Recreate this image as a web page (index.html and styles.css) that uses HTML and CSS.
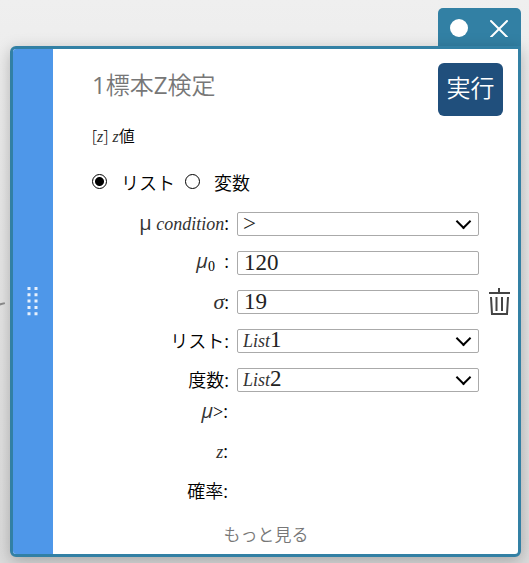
FILE: index.html
```html
<!DOCTYPE html>
<html lang="ja">
<head>
    <meta charset="utf-8">
    <title>1標本Z検定</title>
    <link rel="stylesheet" href="styles.css">
</head>
<body>
    <div class="tab">
        <button type="button" class="dot" aria-label="最小化"></button>
        <button type="button" class="close" aria-label="閉じる">
            <svg width="18" height="18" viewBox="0 0 18 18" fill="none" stroke="#fff" stroke-width="2" stroke-linecap="round">
                <path d="M1 2L17 18M17 2L1 18"/>
            </svg>
        </button>
    </div>
    <div class="window">
        <div class="handle">
            <svg width="12" height="30" viewBox="0 0 12 30" stroke="#e8f1fc" stroke-width="3" stroke-dasharray="3 3.3">
                <path d="M2 0V29M9 0V29"/>
            </svg>
        </div>
        <div class="header">
            <h1><span class="latin">1</span>標本<span class="latin">Z</span>検定</h1>
            <button type="submit" form="testForm" class="run">実行</button>
        </div>
        <form id="testForm" class="content">
            <p class="result-name">[<i>z</i>] <i>z</i>値</p>
            <div class="mode">
                <label><input type="radio" name="mode" checked>リスト</label>
                <label><input type="radio" name="mode">変数</label>
            </div>
            <div class="row">
                <label for="cond"><span class="mu">μ</span> <i>condition</i><b>:</b></label>
                <select id="cond">
                    <button><selectedcontent></selectedcontent></button>
                    <option>&gt;</option>
                    <option>&lt;</option>
                    <option>≠</option>
                </select>
            </div>
            <div class="row">
                <label for="mu0"><span class="mu slant">μ</span><span class="sub">0</span>&nbsp; <b>:</b></label>
                <input type="text" id="mu0" value="120">
            </div>
            <div class="row">
                <label for="sigma"><i class="sigma">σ</i><b>:</b></label>
                <input type="text" id="sigma" value="19">
            </div>
            <div class="row">
                <label for="list">リスト<b>:</b></label>
                <select id="list">
                    <button><selectedcontent></selectedcontent></button>
                    <option><i>List</i>1</option>
                </select>
            </div>
            <div class="row">
                <label for="freq">度数<b>:</b></label>
                <select id="freq">
                    <button><selectedcontent></selectedcontent></button>
                    <option><i>List</i>2</option>
                </select>
            </div>
            <div class="results">
                <div><span class="mu slant">μ</span><span class="gt">&gt;</span><b>:</b></div>
                <div><i>z</i><b>:</b></div>
                <div>確率<b>:</b></div>
            </div>
            <button type="button" class="more">もっと見る</button>
        </form>
        <button type="button" class="trash" aria-label="削除">
            <svg width="22" height="28" viewBox="0 0 22 28" fill="none" stroke="#444" stroke-width="2">
                <path d="M1 5H22M11 0V5"/>
                <path d="M3 9L4 26H19L20 9M8.500 9V23M14 9V23"/>
            </svg>
        </button>
    </div>
</body>
</html>
```

FILE: styles.css
```css
* {
    box-sizing: border-box;
}
body {
    margin: 0;
    padding: 8px 8px 6px 10px;
    background: linear-gradient(#efefef, #dcdcdc);
    font-family: "Open Sans", "Noto Sans CJK JP", sans-serif;
    font-size: 18px;
    font-weight: 350;
    line-height: 24px;
    color: #000;
}
/* end of the line running in behind the window */
body::before {
    content: "";
    position: absolute;
    left: -2px;
    top: 303px;
    width: 7px;
    height: 2px;
    background: #888;
    transform: rotate(-15deg);
}
h1, p {
    margin: 0;
}
button {
    margin: 0;
    padding: 0;
    border: 0;
    background: none;
    font: inherit;
    color: inherit;
}
svg {
    display: block;
}
i {
    font-family: "Liberation Serif", serif;
    font-size: 18px;
    font-style: italic;
    font-weight: 400;
    color: #333;
}
b, .latin {
    font-weight: 400;
}
.tab {
    display: flex;
    align-items: center;
    justify-content: space-between;
    width: 83px;
    height: 38px;
    margin-left: auto;
    padding: 2px 13px 0 12px;
    border-radius: 5px 5px 0 0;
    background: #3280a4;
}
.dot {
    width: 18px;
    height: 18px;
    border-radius: 50%;
    background: #fff;
}
.window {
    display: grid;
    grid-template-columns: 40px 1fr 39px;
    border: 3px solid #3280a4;
    border-radius: 6px 0 6px 6px;
    background: #fff;
    box-shadow: 0 4px 16px rgba(0, 0, 0, 0.25);
}
.handle {
    display: flex;
    align-items: center;
    justify-content: center;
    grid-row: 1 / 3;
    border-radius: 3px 0 0 3px;
    background: #4e97e9;
}
.header {
    display: flex;
    align-items: center;
    justify-content: space-between;
    grid-column: 2 / 4;
    grid-row: 1;
    padding: 14px 15px 0 39px;
}
h1 {
    padding-bottom: 10px;
    font-size: 24px;
    font-weight: 350;
    color: #777;
}
.run {
    width: 65px;
    height: 53px;
    padding-bottom: 4px;
    border-radius: 6px;
    background: #204f7c;
    font-size: 24px;
    color: #fff;
}
.content {
    display: flex;
    flex-direction: column;
    grid-column: 2;
    grid-row: 2;
    padding: 8px 0 7px 39px;
}
.result-name {
    font-size: 16px;
}
.result-name i {
    font-size: 16px;
}
.mode {
    display: flex;
    gap: 10px;
    padding: 22px 0 9px;
}
.mode label {
    display: flex;
    gap: 14px;
}
.mode input {
    appearance: none;
    width: 15px;
    height: 15px;
    margin: 3px 0 0;
    border: 1px solid #000;
    border-radius: 50%;
}
.mode input:checked {
    background: radial-gradient(circle, #000 4px, transparent 5px);
}
.row {
    display: grid;
    grid-template-columns: 137px 1fr;
    align-items: center;
    gap: 8px;
    height: 39px;
}
.row label {
    text-align: right;
    white-space: nowrap;
}
.row input, .row select {
    width: 100%;
    height: 24px;
    margin: 0;
    padding: 0 6px;
    border: 1px solid #aaa;
    border-radius: 2px;
    background: #fff;
    font-family: "Liberation Serif", serif;
    font-size: 23px;
    font-weight: 400;
    line-height: 22px;
    color: #222;
}
.row select {
    appearance: base-select;
    display: flex;
    align-items: center;
    min-height: 0;
    padding: 0 6px 0 5px;
}
.row select::picker-icon {
    content: "";
    width: 9px;
    height: 9px;
    margin: 0 3px 5px auto;
    border: solid #000;
    border-width: 0 2px 2px 0;
    transform: rotate(45deg);
}
.mu {
    font-family: "Open Sans", sans-serif;
    font-size: 20px;
    font-weight: 400;
    line-height: 20px;
    color: #333;
}
.slant {
    font-style: italic;
}
.sub {
    position: relative;
    top: 3px;
    font-family: "Liberation Serif", serif;
    font-size: 14px;
    font-weight: 400;
}
.sigma {
    font-size: 22px;
    line-height: 20px;
}
.gt {
    font-family: "Liberation Serif", serif;
    font-weight: 400;
}
.results {
    display: flex;
    flex-direction: column;
    gap: 16px;
    width: 136px;
    text-align: right;
}
.results div {
    height: 24px;
}
.more {
    align-self: center;
    margin: 20px 39px 0 0;
    font-size: 17px;
    color: #777;
}
.trash {
    grid-column: 3;
    grid-row: 1 / 3;
    place-self: center;
}
```
